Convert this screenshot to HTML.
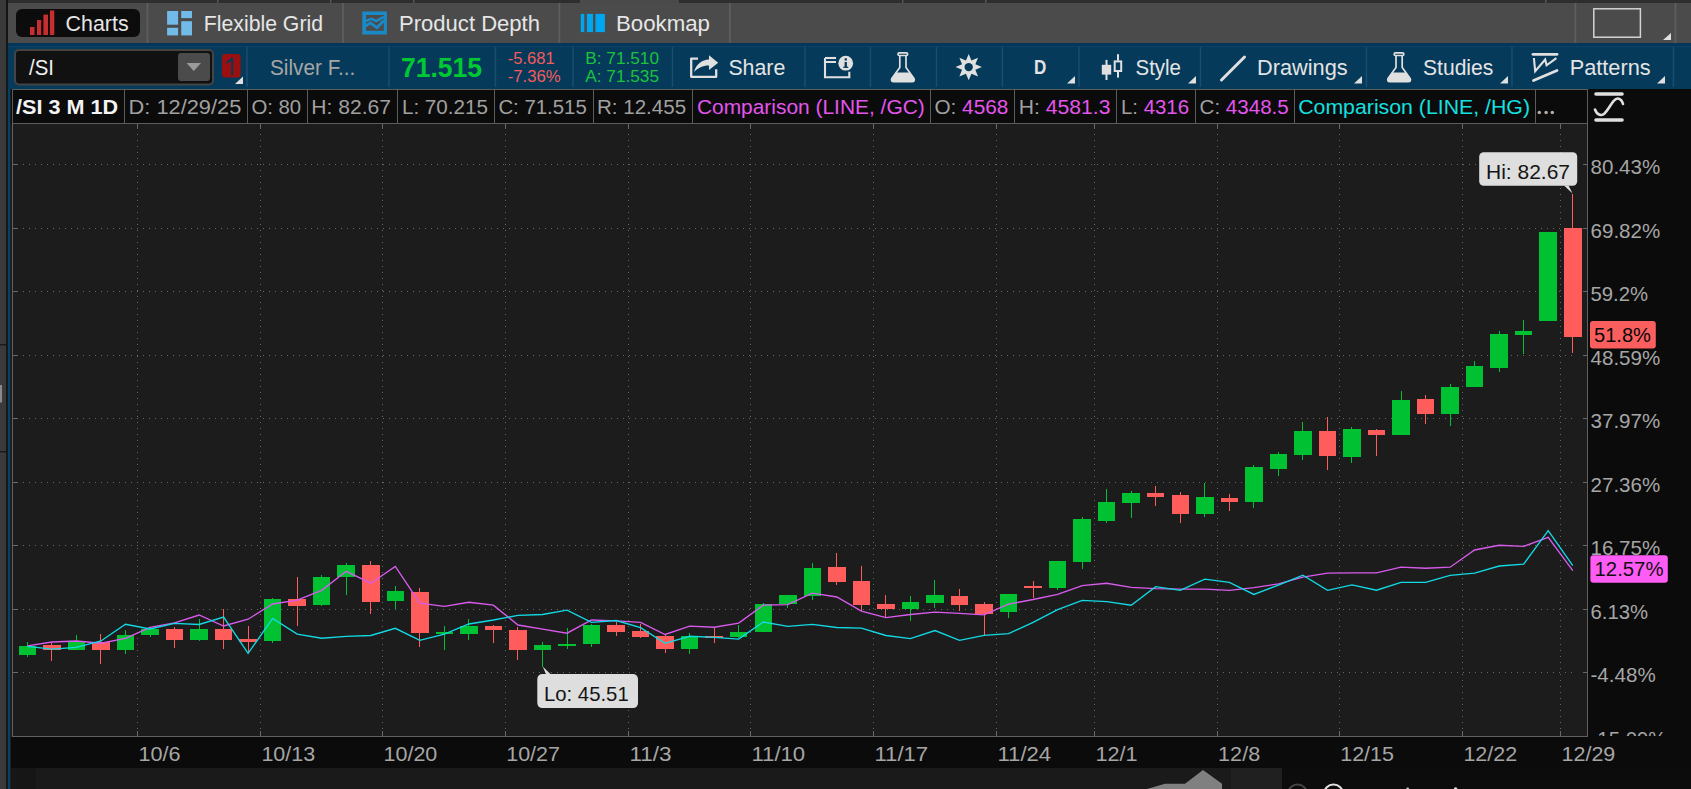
<!DOCTYPE html>
<html><head><meta charset="utf-8"><style>
html,body{margin:0;padding:0;background:#1c1c1c;overflow:hidden;}
svg{display:block;font-family:"Liberation Sans", sans-serif;}
</style></head><body>
<svg width="1691" height="789" viewBox="0 0 1691 789">
<rect x="0" y="0" width="1691" height="789" fill="#1c1c1c"/>
<rect x="0" y="0" width="6" height="789" fill="#3a3a3a"/>
<rect x="0" y="344" width="6" height="1.5" fill="#1a1a1a"/>
<rect x="0" y="451" width="6" height="1.5" fill="#1a1a1a"/>
<rect x="0" y="385" width="2" height="17.5" fill="#8a8a8a"/>
<rect x="6" y="0" width="1.8" height="789" fill="#151515"/>
<rect x="7.8" y="43" width="2.4" height="746" fill="#0a3f60"/>
<rect x="8" y="0" width="1683" height="3" fill="#2e2e2e"/>
<rect x="217" y="0" width="1.5" height="3" fill="#555"/>
<rect x="330" y="0" width="1.5" height="3" fill="#555"/>
<rect x="413" y="0" width="1.5" height="3" fill="#555"/>
<rect x="902" y="0" width="1.5" height="3" fill="#555"/>
<rect x="985" y="0" width="1.5" height="3" fill="#555"/>
<rect x="1545" y="0" width="1.5" height="3" fill="#555"/>
<rect x="580" y="0" width="99" height="3" fill="#4a4a4a"/>
<rect x="8" y="3" width="1683" height="40" fill="#4b4b4b"/>
<rect x="146.5" y="3" width="1.8" height="40" fill="#5e5e5e"/>
<rect x="342" y="3" width="1.8" height="40" fill="#5e5e5e"/>
<rect x="558.5" y="3" width="1.8" height="40" fill="#5e5e5e"/>
<rect x="729" y="3" width="1.8" height="40" fill="#5e5e5e"/>
<rect x="1574.5" y="3" width="1.8" height="40" fill="#5e5e5e"/>
<rect x="1674.5" y="3" width="1.8" height="40" fill="#5e5e5e"/>
<rect x="16" y="9" width="124" height="28" fill="#0c0c0c" rx="6"/>
<rect x="30" y="27" width="4.5" height="8" fill="#c62f2f"/>
<rect x="37" y="20" width="4.200000000000003" height="15" fill="#c62f2f"/>
<rect x="43.4" y="14.6" width="4.600000000000001" height="20.4" fill="#c62f2f"/>
<rect x="49.9" y="10.4" width="4.399999999999999" height="24.6" fill="#c62f2f"/>
<rect x="167.1" y="11" width="11" height="13.7" fill="#72bbe9"/>
<rect x="167.1" y="27.8" width="11" height="7.6" fill="#72bbe9"/>
<rect x="181.2" y="11" width="10.8" height="7.1" fill="#72bbe9"/>
<rect x="181.2" y="21.2" width="10.8" height="14.2" fill="#72bbe9"/>
<path d="M362.3 11.4 H386.9 V34.5 H362.3 Z M366 15.1 V30.8 H383.8 V15.1 Z" fill="#1a8ac6" fill-rule="evenodd"/>
<polyline points="365,21.3 371.4,18.8 376.3,21 384,16.9" fill="none" stroke="#1a8ac6" stroke-width="2.6"/>
<polyline points="365,26.3 370.5,23 377,27.6 384,20.6" fill="none" stroke="#1a8ac6" stroke-width="2.8"/>
<rect x="580.8" y="13.9" width="3.5" height="18.2" fill="#00a6ef"/>
<rect x="586.9" y="13.9" width="6.1" height="18.2" fill="#00a6ef"/>
<rect x="595.4" y="13.9" width="9.5" height="18.2" fill="#00a6ef"/>
<rect x="1593.8" y="8.8" width="46.6" height="28.4" fill="none" stroke="#d4d4d4" stroke-width="1.5"/>
<polygon points="1671,33 1671,40 1663,40" fill="#e0e0e0"/>
<text x="65.6" y="30.8" font-size="22.5" fill="#e6e6e6" textLength="63.0" lengthAdjust="spacingAndGlyphs">Charts</text>
<text x="203.8" y="31.0" font-size="22.5" fill="#e6e6e6" textLength="119.2" lengthAdjust="spacingAndGlyphs">Flexible Grid</text>
<text x="399.0" y="31.0" font-size="22.5" fill="#e6e6e6" textLength="141.0" lengthAdjust="spacingAndGlyphs">Product Depth</text>
<text x="616.0" y="31.0" font-size="22.5" fill="#e6e6e6" textLength="94.0" lengthAdjust="spacingAndGlyphs">Bookmap</text>
<rect x="8" y="43" width="1683" height="46" fill="#053a5b"/>
<rect x="8" y="43" width="1683" height="3" fill="#03365a"/>
<rect x="8" y="46" width="1683" height="1" fill="#0b4364"/>
<rect x="246.2" y="47" width="1.5" height="40" fill="#1d4d6e"/>
<rect x="388.2" y="47" width="1.5" height="40" fill="#1d4d6e"/>
<rect x="494.7" y="47" width="1.5" height="40" fill="#1d4d6e"/>
<rect x="572.3" y="47" width="1.5" height="40" fill="#1d4d6e"/>
<rect x="671.7" y="47" width="1.5" height="40" fill="#1d4d6e"/>
<rect x="804.2" y="47" width="1.5" height="40" fill="#1d4d6e"/>
<rect x="869.7" y="47" width="1.5" height="40" fill="#1d4d6e"/>
<rect x="935.7" y="47" width="1.5" height="40" fill="#1d4d6e"/>
<rect x="1001.7" y="47" width="1.5" height="40" fill="#1d4d6e"/>
<rect x="1078.2" y="47" width="1.5" height="40" fill="#1d4d6e"/>
<rect x="1199.7" y="47" width="1.5" height="40" fill="#1d4d6e"/>
<rect x="1365.7" y="47" width="1.5" height="40" fill="#1d4d6e"/>
<rect x="1511.2" y="47" width="1.5" height="40" fill="#1d4d6e"/>
<rect x="1672.7" y="47" width="1.5" height="40" fill="#1d4d6e"/>
<rect x="15" y="50" width="198" height="34.5" rx="4" fill="#111" stroke="#444" stroke-width="2"/>
<rect x="178" y="53" width="32" height="28" fill="#4b4b4b" rx="3"/>
<polygon points="186.5,63 201,63 193.75,71" fill="#9a9a9a"/>
<text x="29.0" y="75.0" font-size="22.5" fill="#f0f0f0" textLength="25.0" lengthAdjust="spacingAndGlyphs">/SI</text>
<rect x="222" y="54" width="18.6" height="23.6" fill="#9a1010" rx="3"/>
<path d="M227.3 62.6 L232.2 58.6 V74.3" fill="none" stroke="#053a5b" stroke-width="1.9" stroke-linecap="round" stroke-linejoin="round"/>
<polygon points="243,76.6 243,84 235,84" fill="#e0e0e0"/>
<text x="270.0" y="75.0" font-size="22" fill="#a6a6a6" textLength="85.3" lengthAdjust="spacingAndGlyphs">Silver F...</text>
<text x="401.0" y="77.0" font-size="28" fill="#00c832" font-weight="bold" textLength="81.0" lengthAdjust="spacingAndGlyphs">71.515</text>
<text x="507.7" y="63.8" font-size="16.5" fill="#f25c5c" textLength="46.9" lengthAdjust="spacingAndGlyphs">-5.681</text>
<text x="507.7" y="82.3" font-size="16.5" fill="#f25c5c" textLength="53.0" lengthAdjust="spacingAndGlyphs">-7.36%</text>
<text x="585.3" y="63.8" font-size="16.5" fill="#1cc23c" textLength="73.7" lengthAdjust="spacingAndGlyphs">B: 71.510</text>
<text x="585.3" y="82.3" font-size="16.5" fill="#1cc23c" textLength="73.7" lengthAdjust="spacingAndGlyphs">A: 71.535</text>
<path d="M698 58.6 h-6.8 v18.2 h25 v-7.5" fill="none" stroke="#e0e0e0" stroke-width="2.3" stroke-linejoin="round"/>
<path d="M694 72 C696 64 702 60 709 59.5 v-4.3 l9.2 7.5 l-9.2 7.2 v-4.3 C703 65.5 698 68 694 72 Z" fill="#e0e0e0"/>
<text x="728.4" y="75.0" font-size="22" fill="#e4e4e4" textLength="56.9" lengthAdjust="spacingAndGlyphs">Share</text>
<path d="M825 62 h11 M825 58 v19.3 h24.3 v-5.5" fill="none" stroke="#e0e0e0" stroke-width="2.1"/>
<path d="M825 58 h11" fill="none" stroke="#e0e0e0" stroke-width="2.1"/>
<circle cx="845.7" cy="63.2" r="7.4" fill="#e0e0e0"/>
<rect x="844.6" y="62" width="2.3" height="5.3" fill="#053a5b"/><rect x="843.2" y="66.6" width="5" height="1.3" fill="#053a5b"/><rect x="844.6" y="58.3" width="2.3" height="2.2" fill="#053a5b"/>
<rect x="898.0" y="52.9" width="9.6" height="2.6" rx="1.2" fill="none" stroke="#e0e0e0" stroke-width="1.7"/>
<path d="M899.8000000000001 55.5 V67.5 L891.9 78.3 Q890.6 81.5 893.8000000000001 81.7 H912.0 Q915.2 81.5 913.9 78.3 L906.0 67.5 V55.5" fill="none" stroke="#e0e0e0" stroke-width="1.7"/>
<path d="M895.7 72.6 H910.1 L913.9 78.3 Q915.2 81.5 912.0 81.7 H893.8000000000001 Q890.6 81.5 891.9 78.3 Z" fill="#e0e0e0"/>
<rect x="1394.2" y="52.9" width="9.6" height="2.6" rx="1.2" fill="none" stroke="#e0e0e0" stroke-width="1.7"/>
<path d="M1396.0 55.5 V67.5 L1388.1 78.3 Q1386.8 81.5 1390.0 81.7 H1408.2 Q1411.3999999999999 81.5 1410.1 78.3 L1402.2 67.5 V55.5" fill="none" stroke="#e0e0e0" stroke-width="1.7"/>
<path d="M1391.8999999999999 72.6 H1406.3 L1410.1 78.3 Q1411.3999999999999 81.5 1408.2 81.7 H1390.0 Q1386.8 81.5 1388.1 78.3 Z" fill="#e0e0e0"/>
<polygon points="968.70,53.90 971.46,60.45 978.03,57.77 975.35,64.34 981.90,67.10 975.35,69.86 978.03,76.43 971.46,73.75 968.70,80.30 965.94,73.75 959.37,76.43 962.05,69.86 955.50,67.10 962.05,64.34 959.37,57.77 965.94,60.45" fill="#e0e0e0"/>
<circle cx="968.7" cy="67.1" r="4.2" fill="#063a5a"/>
<text x="1034.0" y="74.0" font-size="19.5" fill="#e4e4e4" font-weight="bold" textLength="12.3" lengthAdjust="spacingAndGlyphs">D</text>
<polygon points="1075,76.0 1075,83.5 1067,83.5" fill="#e0e0e0"/>
<polygon points="1196,76.0 1196,83.5 1188,83.5" fill="#e0e0e0"/>
<polygon points="1362,76.0 1362,83.5 1354,83.5" fill="#e0e0e0"/>
<polygon points="1508,76.0 1508,83.5 1500,83.5" fill="#e0e0e0"/>
<polygon points="1665,76.0 1665,83.5 1657,83.5" fill="#e0e0e0"/>
<rect x="1101.8" y="64.8" width="9.4" height="9.8" fill="#e0e0e0"/><rect x="1105.5" y="59.9" width="2" height="20.1" fill="#e0e0e0"/>
<rect x="1114.7" y="61.4" width="6.5" height="9.6" fill="none" stroke="#e0e0e0" stroke-width="2"/><rect x="1117" y="54.2" width="2" height="6.5" fill="#e0e0e0"/><rect x="1117" y="71.5" width="2" height="6.1" fill="#e0e0e0"/>
<text x="1135.5" y="74.6" font-size="22" fill="#e4e4e4" textLength="45.5" lengthAdjust="spacingAndGlyphs">Style</text>
<line x1="1221.5" y1="80" x2="1244.5" y2="57" stroke="#e0e0e0" stroke-width="3" stroke-linecap="round"/>
<text x="1257.0" y="75.0" font-size="22" fill="#e4e4e4" textLength="90.6" lengthAdjust="spacingAndGlyphs">Drawings</text>
<text x="1423.0" y="75.0" font-size="22" fill="#e4e4e4" textLength="70.3" lengthAdjust="spacingAndGlyphs">Studies</text>
<line x1="1533" y1="54.3" x2="1557" y2="54.3" stroke="#e0e0e0" stroke-width="2.8" stroke-linecap="round"/>
<polyline points="1533.9,58 1535.2,71.2 1545.2,59.6 1546.6,65.3 1556.4,58.2" fill="none" stroke="#e0e0e0" stroke-width="2.1" stroke-linejoin="miter"/>
<line x1="1533.5" y1="80.5" x2="1557" y2="70.5" stroke="#e0e0e0" stroke-width="2.8" stroke-linecap="round"/>
<text x="1569.7" y="75.0" font-size="22" fill="#e4e4e4" textLength="81.0" lengthAdjust="spacingAndGlyphs">Patterns</text>
<rect x="11" y="89" width="1680" height="35" fill="#0b0b0b"/>
<g shape-rendering="crispEdges">
<rect x="12" y="89" width="1576" height="1" fill="#5c5c5c"/>
<rect x="12" y="123" width="1576" height="1" fill="#5c5c5c"/>
<rect x="12" y="89" width="1" height="35" fill="#5c5c5c"/>
<rect x="124" y="89" width="1" height="35" fill="#5c5c5c"/>
<rect x="247" y="89" width="1" height="35" fill="#5c5c5c"/>
<rect x="307" y="89" width="1" height="35" fill="#5c5c5c"/>
<rect x="397" y="89" width="1" height="35" fill="#5c5c5c"/>
<rect x="494" y="89" width="1" height="35" fill="#5c5c5c"/>
<rect x="593" y="89" width="1" height="35" fill="#5c5c5c"/>
<rect x="692" y="89" width="1" height="35" fill="#5c5c5c"/>
<rect x="930" y="89" width="1" height="35" fill="#5c5c5c"/>
<rect x="1014" y="89" width="1" height="35" fill="#5c5c5c"/>
<rect x="1116" y="89" width="1" height="35" fill="#5c5c5c"/>
<rect x="1195" y="89" width="1" height="35" fill="#5c5c5c"/>
<rect x="1294" y="89" width="1" height="35" fill="#5c5c5c"/>
<rect x="1535" y="89" width="1" height="35" fill="#5c5c5c"/>
<rect x="1587" y="89" width="1" height="35" fill="#5c5c5c"/>
</g>
<text x="16.0" y="114.0" font-size="20.5" fill="#f4f4f4" font-weight="bold" textLength="102.0" lengthAdjust="spacingAndGlyphs">/SI 3 M 1D</text>
<text x="128.6" y="114.0" font-size="20.5" fill="#a0a0a0" textLength="112.7" lengthAdjust="spacingAndGlyphs">D: 12/29/25</text>
<text x="251.4" y="114.0" font-size="20.5" fill="#a0a0a0" textLength="49.8" lengthAdjust="spacingAndGlyphs">O: 80</text>
<text x="311.3" y="114.0" font-size="20.5" fill="#a0a0a0" textLength="79.7" lengthAdjust="spacingAndGlyphs">H: 82.67</text>
<text x="401.9" y="114.0" font-size="20.5" fill="#a0a0a0" textLength="86.2" lengthAdjust="spacingAndGlyphs">L: 70.215</text>
<text x="498.4" y="114.0" font-size="20.5" fill="#a0a0a0" textLength="88.4" lengthAdjust="spacingAndGlyphs">C: 71.515</text>
<text x="597.0" y="114.0" font-size="20.5" fill="#a0a0a0" textLength="89.1" lengthAdjust="spacingAndGlyphs">R: 12.455</text>
<text x="696.9" y="114.0" font-size="20.5" fill="#e455ee" textLength="227.9" lengthAdjust="spacingAndGlyphs">Comparison (LINE, /GC)</text>
<text x="934.4" y="114" font-size="20.5" textLength="73.9" lengthAdjust="spacingAndGlyphs"><tspan fill="#a0a0a0">O: </tspan><tspan fill="#e455ee">4568</tspan></text>
<text x="1018.7" y="114" font-size="20.5" textLength="91.7" lengthAdjust="spacingAndGlyphs"><tspan fill="#a0a0a0">H: </tspan><tspan fill="#e455ee">4581.3</tspan></text>
<text x="1121.0" y="114" font-size="20.5" textLength="68.0" lengthAdjust="spacingAndGlyphs"><tspan fill="#a0a0a0">L: </tspan><tspan fill="#e455ee">4316</tspan></text>
<text x="1199.6" y="114" font-size="20.5" textLength="89.1" lengthAdjust="spacingAndGlyphs"><tspan fill="#a0a0a0">C: </tspan><tspan fill="#e455ee">4348.5</tspan></text>
<text x="1298.2" y="114.0" font-size="20.5" fill="#14e0e0" textLength="231.8" lengthAdjust="spacingAndGlyphs">Comparison (LINE, /HG)</text>
<circle cx="1539.3" cy="112.4" r="1.75" fill="#b4aca4"/>
<circle cx="1546.1" cy="112.4" r="1.75" fill="#b4aca4"/>
<circle cx="1552.3" cy="112.4" r="1.75" fill="#b4aca4"/>
<rect x="1588" y="89" width="103" height="34" fill="#0b0b0b"/>
<line x1="1596" y1="94" x2="1622" y2="94" stroke="#e0e0e0" stroke-width="3.6" stroke-linecap="round"/>
<line x1="1596" y1="120" x2="1622" y2="120" stroke="#e0e0e0" stroke-width="3.6" stroke-linecap="round"/>
<path d="M1595 109.5 C1597 115 1601 116 1604 114 C1609 110 1613 98 1618 98.5 C1621 99 1622.5 102 1623 104" fill="none" stroke="#e0e0e0" stroke-width="2.6" stroke-linecap="round"/>
<rect x="1588" y="124" width="103" height="665" fill="#0b0b0b"/>
<rect x="11" y="737" width="1577" height="31" fill="#0b0b0b"/>
<rect x="11" y="768" width="1271" height="21" fill="#1a1a1a"/>
<rect x="11" y="768" width="25" height="21" fill="#161616"/>
<rect x="1231" y="768" width="51" height="21" fill="#202020"/>
<rect x="1282" y="768" width="409" height="21" fill="#0c0c0c"/>
<polygon points="1147,789 1165,783.7 1185,783.7 1203,770 1222,783.7 1222,789" fill="#808080"/>
<circle cx="1297.5" cy="794" r="9.5" fill="none" stroke="#444" stroke-width="2"/>
<circle cx="1333.5" cy="794" r="9.5" fill="none" stroke="#e0e0e0" stroke-width="2"/>
<circle cx="1407.7" cy="789" r="1.4" fill="#cfcfcf"/>
<circle cx="1455.6" cy="789" r="1.8" fill="#e0e0e0"/>
<g shape-rendering="crispEdges">
<line x1="23" y1="164.5" x2="1576" y2="164.5" stroke="#686868" stroke-width="1" stroke-dasharray="1 5"/>
<rect x="13" y="164" width="5" height="1" fill="#686868"/>
<rect x="1583" y="164" width="5" height="1" fill="#686868"/>
<line x1="23" y1="228.5" x2="1576" y2="228.5" stroke="#686868" stroke-width="1" stroke-dasharray="1 5"/>
<rect x="13" y="228" width="5" height="1" fill="#686868"/>
<rect x="1583" y="228" width="5" height="1" fill="#686868"/>
<line x1="23" y1="291.5" x2="1576" y2="291.5" stroke="#686868" stroke-width="1" stroke-dasharray="1 5"/>
<rect x="13" y="291" width="5" height="1" fill="#686868"/>
<rect x="1583" y="291" width="5" height="1" fill="#686868"/>
<line x1="23" y1="355.5" x2="1576" y2="355.5" stroke="#686868" stroke-width="1" stroke-dasharray="1 5"/>
<rect x="13" y="355" width="5" height="1" fill="#686868"/>
<rect x="1583" y="355" width="5" height="1" fill="#686868"/>
<line x1="23" y1="418.5" x2="1576" y2="418.5" stroke="#686868" stroke-width="1" stroke-dasharray="1 5"/>
<rect x="13" y="418" width="5" height="1" fill="#686868"/>
<rect x="1583" y="418" width="5" height="1" fill="#686868"/>
<line x1="23" y1="482.5" x2="1576" y2="482.5" stroke="#686868" stroke-width="1" stroke-dasharray="1 5"/>
<rect x="13" y="482" width="5" height="1" fill="#686868"/>
<rect x="1583" y="482" width="5" height="1" fill="#686868"/>
<line x1="23" y1="545.5" x2="1576" y2="545.5" stroke="#686868" stroke-width="1" stroke-dasharray="1 5"/>
<rect x="13" y="545" width="5" height="1" fill="#686868"/>
<rect x="1583" y="545" width="5" height="1" fill="#686868"/>
<line x1="23" y1="609.5" x2="1576" y2="609.5" stroke="#686868" stroke-width="1" stroke-dasharray="1 5"/>
<rect x="13" y="609" width="5" height="1" fill="#686868"/>
<rect x="1583" y="609" width="5" height="1" fill="#686868"/>
<line x1="23" y1="672.5" x2="1576" y2="672.5" stroke="#686868" stroke-width="1" stroke-dasharray="1 5"/>
<rect x="13" y="672" width="5" height="1" fill="#686868"/>
<rect x="1583" y="672" width="5" height="1" fill="#686868"/>
<line x1="137.5" y1="128" x2="137.5" y2="731" stroke="#686868" stroke-width="1" stroke-dasharray="1 5"/>
<rect x="137" y="124" width="1" height="5" fill="#686868"/>
<rect x="137" y="731" width="1" height="5" fill="#686868"/>
<line x1="260.5" y1="128" x2="260.5" y2="731" stroke="#686868" stroke-width="1" stroke-dasharray="1 5"/>
<rect x="260" y="124" width="1" height="5" fill="#686868"/>
<rect x="260" y="731" width="1" height="5" fill="#686868"/>
<line x1="382.5" y1="128" x2="382.5" y2="731" stroke="#686868" stroke-width="1" stroke-dasharray="1 5"/>
<rect x="382" y="124" width="1" height="5" fill="#686868"/>
<rect x="382" y="731" width="1" height="5" fill="#686868"/>
<line x1="505.5" y1="128" x2="505.5" y2="731" stroke="#686868" stroke-width="1" stroke-dasharray="1 5"/>
<rect x="505" y="124" width="1" height="5" fill="#686868"/>
<rect x="505" y="731" width="1" height="5" fill="#686868"/>
<line x1="628.5" y1="128" x2="628.5" y2="731" stroke="#686868" stroke-width="1" stroke-dasharray="1 5"/>
<rect x="628" y="124" width="1" height="5" fill="#686868"/>
<rect x="628" y="731" width="1" height="5" fill="#686868"/>
<line x1="750.5" y1="128" x2="750.5" y2="731" stroke="#686868" stroke-width="1" stroke-dasharray="1 5"/>
<rect x="750" y="124" width="1" height="5" fill="#686868"/>
<rect x="750" y="731" width="1" height="5" fill="#686868"/>
<line x1="873.5" y1="128" x2="873.5" y2="731" stroke="#686868" stroke-width="1" stroke-dasharray="1 5"/>
<rect x="873" y="124" width="1" height="5" fill="#686868"/>
<rect x="873" y="731" width="1" height="5" fill="#686868"/>
<line x1="996.5" y1="128" x2="996.5" y2="731" stroke="#686868" stroke-width="1" stroke-dasharray="1 5"/>
<rect x="996" y="124" width="1" height="5" fill="#686868"/>
<rect x="996" y="731" width="1" height="5" fill="#686868"/>
<line x1="1094.5" y1="128" x2="1094.5" y2="731" stroke="#686868" stroke-width="1" stroke-dasharray="1 5"/>
<rect x="1094" y="124" width="1" height="5" fill="#686868"/>
<rect x="1094" y="731" width="1" height="5" fill="#686868"/>
<line x1="1217.5" y1="128" x2="1217.5" y2="731" stroke="#686868" stroke-width="1" stroke-dasharray="1 5"/>
<rect x="1217" y="124" width="1" height="5" fill="#686868"/>
<rect x="1217" y="731" width="1" height="5" fill="#686868"/>
<line x1="1339.5" y1="128" x2="1339.5" y2="731" stroke="#686868" stroke-width="1" stroke-dasharray="1 5"/>
<rect x="1339" y="124" width="1" height="5" fill="#686868"/>
<rect x="1339" y="731" width="1" height="5" fill="#686868"/>
<line x1="1462.5" y1="128" x2="1462.5" y2="731" stroke="#686868" stroke-width="1" stroke-dasharray="1 5"/>
<rect x="1462" y="124" width="1" height="5" fill="#686868"/>
<rect x="1462" y="731" width="1" height="5" fill="#686868"/>
<line x1="1560.5" y1="128" x2="1560.5" y2="731" stroke="#686868" stroke-width="1" stroke-dasharray="1 5"/>
<rect x="1560" y="124" width="1" height="5" fill="#686868"/>
<rect x="1560" y="731" width="1" height="5" fill="#686868"/>
</g>
<g shape-rendering="crispEdges">
<rect x="12" y="123" width="1" height="614" fill="#606060"/>
<rect x="12" y="736" width="1576" height="1" fill="#606060"/>
<rect x="1587" y="123" width="1" height="614" fill="#606060"/>
</g>
<g shape-rendering="crispEdges">
<rect x="27" y="642" width="1" height="15" fill="#00c132"/>
<rect x="19" y="646" width="17" height="9" fill="#00c132"/>
<rect x="51" y="643" width="1" height="18" fill="#ff5c5c"/>
<rect x="43" y="645" width="18" height="5" fill="#ff5c5c"/>
<rect x="76" y="635" width="1" height="15" fill="#00c132"/>
<rect x="68" y="642" width="17" height="8" fill="#00c132"/>
<rect x="100" y="634" width="1" height="30" fill="#ff5c5c"/>
<rect x="92" y="642" width="18" height="8" fill="#ff5c5c"/>
<rect x="125" y="630" width="1" height="24" fill="#00c132"/>
<rect x="117" y="635" width="17" height="15" fill="#00c132"/>
<rect x="150" y="628" width="1" height="9" fill="#00c132"/>
<rect x="141" y="629" width="18" height="6" fill="#00c132"/>
<rect x="174" y="627" width="1" height="21" fill="#ff5c5c"/>
<rect x="166" y="629" width="17" height="11" fill="#ff5c5c"/>
<rect x="199" y="619" width="1" height="22" fill="#00c132"/>
<rect x="190" y="629" width="18" height="11" fill="#00c132"/>
<rect x="223" y="609" width="1" height="40" fill="#ff5c5c"/>
<rect x="215" y="629" width="17" height="11" fill="#ff5c5c"/>
<rect x="248" y="626" width="1" height="27" fill="#ff5c5c"/>
<rect x="239" y="639" width="18" height="3" fill="#ff5c5c"/>
<rect x="272" y="598" width="1" height="45" fill="#00c132"/>
<rect x="264" y="599" width="17" height="42" fill="#00c132"/>
<rect x="297" y="577" width="1" height="49" fill="#ff5c5c"/>
<rect x="288" y="599" width="18" height="7" fill="#ff5c5c"/>
<rect x="321" y="575" width="1" height="31" fill="#00c132"/>
<rect x="313" y="577" width="17" height="28" fill="#00c132"/>
<rect x="346" y="563" width="1" height="32" fill="#00c132"/>
<rect x="337" y="565" width="18" height="12" fill="#00c132"/>
<rect x="370" y="561" width="1" height="53" fill="#ff5c5c"/>
<rect x="362" y="565" width="18" height="37" fill="#ff5c5c"/>
<rect x="395" y="586" width="1" height="23" fill="#00c132"/>
<rect x="387" y="591" width="17" height="10" fill="#00c132"/>
<rect x="419" y="588" width="1" height="59" fill="#ff5c5c"/>
<rect x="411" y="592" width="18" height="41" fill="#ff5c5c"/>
<rect x="444" y="626" width="1" height="24" fill="#00c132"/>
<rect x="436" y="632" width="17" height="2" fill="#00c132"/>
<rect x="468" y="619" width="1" height="21" fill="#00c132"/>
<rect x="460" y="626" width="18" height="8" fill="#00c132"/>
<rect x="493" y="625" width="1" height="18" fill="#ff5c5c"/>
<rect x="485" y="626" width="17" height="4" fill="#ff5c5c"/>
<rect x="517" y="627" width="1" height="33" fill="#ff5c5c"/>
<rect x="509" y="630" width="18" height="20" fill="#ff5c5c"/>
<rect x="542" y="642" width="1" height="25" fill="#00c132"/>
<rect x="534" y="645" width="17" height="5" fill="#00c132"/>
<rect x="567" y="628" width="1" height="21" fill="#00c132"/>
<rect x="558" y="644" width="18" height="2" fill="#00c132"/>
<rect x="591" y="624" width="1" height="23" fill="#00c132"/>
<rect x="583" y="625" width="17" height="19" fill="#00c132"/>
<rect x="616" y="622" width="1" height="14" fill="#ff5c5c"/>
<rect x="607" y="625" width="18" height="7" fill="#ff5c5c"/>
<rect x="640" y="624" width="1" height="14" fill="#ff5c5c"/>
<rect x="632" y="631" width="17" height="6" fill="#ff5c5c"/>
<rect x="665" y="635" width="1" height="18" fill="#ff5c5c"/>
<rect x="656" y="636" width="18" height="13" fill="#ff5c5c"/>
<rect x="689" y="633" width="1" height="21" fill="#00c132"/>
<rect x="681" y="636" width="17" height="13" fill="#00c132"/>
<rect x="714" y="627" width="1" height="16" fill="#ff5c5c"/>
<rect x="705" y="636" width="18" height="2" fill="#ff5c5c"/>
<rect x="738" y="625" width="1" height="13" fill="#00c132"/>
<rect x="730" y="632" width="17" height="5" fill="#00c132"/>
<rect x="763" y="603" width="1" height="29" fill="#00c132"/>
<rect x="755" y="604" width="17" height="28" fill="#00c132"/>
<rect x="787" y="595" width="1" height="13" fill="#00c132"/>
<rect x="779" y="595" width="18" height="9" fill="#00c132"/>
<rect x="812" y="563" width="1" height="37" fill="#00c132"/>
<rect x="804" y="568" width="17" height="28" fill="#00c132"/>
<rect x="836" y="553" width="1" height="32" fill="#ff5c5c"/>
<rect x="828" y="567" width="18" height="15" fill="#ff5c5c"/>
<rect x="861" y="566" width="1" height="45" fill="#ff5c5c"/>
<rect x="853" y="581" width="17" height="24" fill="#ff5c5c"/>
<rect x="885" y="595" width="1" height="23" fill="#ff5c5c"/>
<rect x="877" y="604" width="18" height="5" fill="#ff5c5c"/>
<rect x="910" y="596" width="1" height="25" fill="#00c132"/>
<rect x="902" y="602" width="17" height="7" fill="#00c132"/>
<rect x="934" y="580" width="1" height="28" fill="#00c132"/>
<rect x="926" y="595" width="18" height="8" fill="#00c132"/>
<rect x="959" y="589" width="1" height="22" fill="#ff5c5c"/>
<rect x="951" y="596" width="17" height="9" fill="#ff5c5c"/>
<rect x="984" y="602" width="1" height="33" fill="#ff5c5c"/>
<rect x="975" y="604" width="18" height="10" fill="#ff5c5c"/>
<rect x="1008" y="594" width="1" height="24" fill="#00c132"/>
<rect x="1000" y="594" width="17" height="18" fill="#00c132"/>
<rect x="1033" y="581" width="1" height="17" fill="#ff5c5c"/>
<rect x="1024" y="586" width="18" height="2" fill="#ff5c5c"/>
<rect x="1057" y="561" width="1" height="29" fill="#00c132"/>
<rect x="1049" y="561" width="17" height="27" fill="#00c132"/>
<rect x="1082" y="517" width="1" height="52" fill="#00c132"/>
<rect x="1073" y="519" width="18" height="43" fill="#00c132"/>
<rect x="1106" y="489" width="1" height="34" fill="#00c132"/>
<rect x="1098" y="502" width="17" height="19" fill="#00c132"/>
<rect x="1131" y="491" width="1" height="27" fill="#00c132"/>
<rect x="1122" y="493" width="18" height="10" fill="#00c132"/>
<rect x="1155" y="486" width="1" height="20" fill="#ff5c5c"/>
<rect x="1147" y="493" width="17" height="4" fill="#ff5c5c"/>
<rect x="1180" y="492" width="1" height="31" fill="#ff5c5c"/>
<rect x="1172" y="495" width="17" height="19" fill="#ff5c5c"/>
<rect x="1204" y="483" width="1" height="34" fill="#00c132"/>
<rect x="1196" y="497" width="18" height="17" fill="#00c132"/>
<rect x="1229" y="494" width="1" height="17" fill="#ff5c5c"/>
<rect x="1221" y="498" width="17" height="4" fill="#ff5c5c"/>
<rect x="1253" y="465" width="1" height="43" fill="#00c132"/>
<rect x="1245" y="467" width="18" height="35" fill="#00c132"/>
<rect x="1278" y="452" width="1" height="24" fill="#00c132"/>
<rect x="1270" y="454" width="17" height="15" fill="#00c132"/>
<rect x="1302" y="422" width="1" height="38" fill="#00c132"/>
<rect x="1294" y="431" width="18" height="24" fill="#00c132"/>
<rect x="1327" y="417" width="1" height="53" fill="#ff5c5c"/>
<rect x="1319" y="431" width="17" height="25" fill="#ff5c5c"/>
<rect x="1351" y="427" width="1" height="36" fill="#00c132"/>
<rect x="1343" y="429" width="18" height="28" fill="#00c132"/>
<rect x="1376" y="429" width="1" height="27" fill="#ff5c5c"/>
<rect x="1368" y="430" width="17" height="5" fill="#ff5c5c"/>
<rect x="1401" y="391" width="1" height="44" fill="#00c132"/>
<rect x="1392" y="400" width="18" height="35" fill="#00c132"/>
<rect x="1425" y="395" width="1" height="29" fill="#ff5c5c"/>
<rect x="1417" y="399" width="17" height="15" fill="#ff5c5c"/>
<rect x="1450" y="384" width="1" height="42" fill="#00c132"/>
<rect x="1441" y="387" width="18" height="27" fill="#00c132"/>
<rect x="1474" y="361" width="1" height="26" fill="#00c132"/>
<rect x="1466" y="366" width="17" height="21" fill="#00c132"/>
<rect x="1499" y="331" width="1" height="41" fill="#00c132"/>
<rect x="1490" y="334" width="18" height="34" fill="#00c132"/>
<rect x="1523" y="320" width="1" height="34" fill="#00c132"/>
<rect x="1515" y="331" width="17" height="4" fill="#00c132"/>
<rect x="1548" y="232" width="1" height="89" fill="#00c132"/>
<rect x="1539" y="232" width="18" height="89" fill="#00c132"/>
<rect x="1572" y="194" width="1" height="159" fill="#ff5c5c"/>
<rect x="1564" y="228" width="18" height="109" fill="#ff5c5c"/>
</g>
<polyline points="27.4,645.8 51.9,642 76.4,641 100.9,643.2 125.5,638.3 150.0,627.3 174.5,622.8 199.1,615 223.6,626 248.1,619.2 272.7,604 297.2,600.2 321.7,590.3 346.2,571.3 370.8,583.2 395.3,566.4 419.8,603.1 444.4,606.4 468.9,602.3 493.4,605.2 518.0,625 542.5,629.1 567.0,633.2 591.5,620 616.1,620.8 640.6,622.4 665.1,634.5 689.7,626.2 714.2,627.2 738.7,623.1 763.3,605.2 787.8,604.6 812.3,593.2 836.8,597 861.4,611.2 885.9,617.6 910.4,614.5 935.0,612.2 959.5,613.3 984.0,614.8 1008.6,604.1 1033.1,599.5 1057.6,594.3 1082.2,585.6 1106.7,583.3 1131.2,587.4 1155.7,588.6 1180.3,589.1 1204.8,589.1 1229.3,590.4 1253.9,587.7 1278.4,583.8 1302.9,577.1 1327.5,573.1 1352.0,572.8 1376.5,572.8 1401.0,567.2 1425.6,568.2 1450.1,567.2 1474.6,550 1499.2,545.3 1523.7,546.3 1548.2,537.4 1572.8,570.6" fill="none" stroke="#d95bee" stroke-width="1.35" stroke-linejoin="miter"/>
<polyline points="27.4,646.4 51.9,649.1 76.4,647.4 100.9,641 125.5,624.3 150.0,629 174.5,623.4 199.1,624.5 223.6,617 248.1,653.4 272.7,618.4 297.2,634.1 321.7,638.2 346.2,636.4 370.8,635.5 395.3,628.3 419.8,640.3 444.4,634.2 468.9,624 493.4,620 518.0,615.3 542.5,614.5 567.0,610.2 591.5,622.4 616.1,620.5 640.6,627.7 665.1,643.3 689.7,636.3 714.2,637.3 738.7,639.1 763.3,622 787.8,626.4 812.3,624.4 836.8,627.5 861.4,628.2 885.9,635.5 910.4,638.6 935.0,630.5 959.5,640.4 984.0,635.3 1008.6,633.7 1033.1,622.3 1057.6,609.6 1082.2,600.4 1106.7,601.6 1131.2,605.2 1155.7,586.6 1180.3,590.4 1204.8,579.2 1229.3,582.4 1253.9,594.4 1278.4,585.1 1302.9,575.2 1327.5,590.4 1352.0,584.9 1376.5,590.2 1401.0,582.4 1425.6,582.4 1450.1,575.3 1474.6,573.1 1499.2,566 1523.7,564.1 1548.2,530.7 1572.8,565.6" fill="none" stroke="#12d9e4" stroke-width="1.35" stroke-linejoin="miter"/>
<rect x="1479.2" y="152.2" width="98" height="33.6" rx="4.5" fill="#dedede"/>
<polygon points="1564,185.5 1568.5,185.5 1572.6,193.6" fill="#dedede"/>
<text x="1486.0" y="178.5" font-size="21" fill="#141414" textLength="84.0" lengthAdjust="spacingAndGlyphs">Hi: 82.67</text>
<rect x="537.3" y="674" width="100.7" height="34.1" rx="5" fill="#dedede"/>
<polygon points="542.6,666.5 546.2,674.5 551,674.5" fill="#dedede"/>
<text x="544.0" y="701.0" font-size="21" fill="#141414" textLength="84.7" lengthAdjust="spacingAndGlyphs">Lo: 45.51</text>
<clipPath id="axclip"><rect x="1588" y="123" width="103" height="613"/></clipPath>
<g clip-path="url(#axclip)">
<text x="1590.5" y="174.0" font-size="21" fill="#a6a6a6" textLength="69.8" lengthAdjust="spacingAndGlyphs">80.43%</text>
<text x="1590.5" y="238.0" font-size="21" fill="#a6a6a6" textLength="69.8" lengthAdjust="spacingAndGlyphs">69.82%</text>
<text x="1590.5" y="301.0" font-size="21" fill="#a6a6a6" textLength="57.6" lengthAdjust="spacingAndGlyphs">59.2%</text>
<text x="1590.5" y="365.0" font-size="21" fill="#a6a6a6" textLength="69.8" lengthAdjust="spacingAndGlyphs">48.59%</text>
<text x="1590.5" y="428.0" font-size="21" fill="#a6a6a6" textLength="69.8" lengthAdjust="spacingAndGlyphs">37.97%</text>
<text x="1590.5" y="492.0" font-size="21" fill="#a6a6a6" textLength="69.8" lengthAdjust="spacingAndGlyphs">27.36%</text>
<text x="1590.5" y="555.0" font-size="21" fill="#a6a6a6" textLength="69.8" lengthAdjust="spacingAndGlyphs">16.75%</text>
<text x="1590.5" y="619.0" font-size="21" fill="#a6a6a6" textLength="57.6" lengthAdjust="spacingAndGlyphs">6.13%</text>
<text x="1590.5" y="682.0" font-size="21" fill="#a6a6a6" textLength="65.2" lengthAdjust="spacingAndGlyphs">-4.48%</text>
<text x="1590.5" y="746.0" font-size="21" fill="#a6a6a6" textLength="76.0" lengthAdjust="spacingAndGlyphs">-15.09%</text>
</g>
<rect x="1590" y="321" width="65.8" height="27.6" fill="#fb5e5e" rx="3"/>
<text x="1594.0" y="342.0" font-size="20" fill="#080808" textLength="57.0" lengthAdjust="spacingAndGlyphs">51.8%</text>
<rect x="1590.4" y="555.3" width="77.4" height="27.4" fill="#ff5cf6" rx="3"/>
<text x="1594.5" y="576.2" font-size="20" fill="#111" textLength="69.0" lengthAdjust="spacingAndGlyphs">12.57%</text>
<text x="138.5" y="761.2" font-size="21" fill="#a6a6a6" textLength="42.1" lengthAdjust="spacingAndGlyphs">10/6</text>
<text x="261.4" y="761.2" font-size="21" fill="#a6a6a6" textLength="53.8" lengthAdjust="spacingAndGlyphs">10/13</text>
<text x="383.5" y="761.2" font-size="21" fill="#a6a6a6" textLength="53.8" lengthAdjust="spacingAndGlyphs">10/20</text>
<text x="506.2" y="761.2" font-size="21" fill="#a6a6a6" textLength="53.8" lengthAdjust="spacingAndGlyphs">10/27</text>
<text x="629.4" y="761.2" font-size="21" fill="#a6a6a6" textLength="42.1" lengthAdjust="spacingAndGlyphs">11/3</text>
<text x="751.4" y="761.2" font-size="21" fill="#a6a6a6" textLength="53.8" lengthAdjust="spacingAndGlyphs">11/10</text>
<text x="874.4" y="761.2" font-size="21" fill="#a6a6a6" textLength="53.8" lengthAdjust="spacingAndGlyphs">11/17</text>
<text x="997.4" y="761.2" font-size="21" fill="#a6a6a6" textLength="53.8" lengthAdjust="spacingAndGlyphs">11/24</text>
<text x="1095.4" y="761.2" font-size="21" fill="#a6a6a6" textLength="42.1" lengthAdjust="spacingAndGlyphs">12/1</text>
<text x="1218.1" y="761.2" font-size="21" fill="#a6a6a6" textLength="42.1" lengthAdjust="spacingAndGlyphs">12/8</text>
<text x="1340.2" y="761.2" font-size="21" fill="#a6a6a6" textLength="53.8" lengthAdjust="spacingAndGlyphs">12/15</text>
<text x="1463.4" y="761.2" font-size="21" fill="#a6a6a6" textLength="53.8" lengthAdjust="spacingAndGlyphs">12/22</text>
<text x="1561.5" y="761.2" font-size="21" fill="#a6a6a6" textLength="53.8" lengthAdjust="spacingAndGlyphs">12/29</text>
</svg>
</body></html>
